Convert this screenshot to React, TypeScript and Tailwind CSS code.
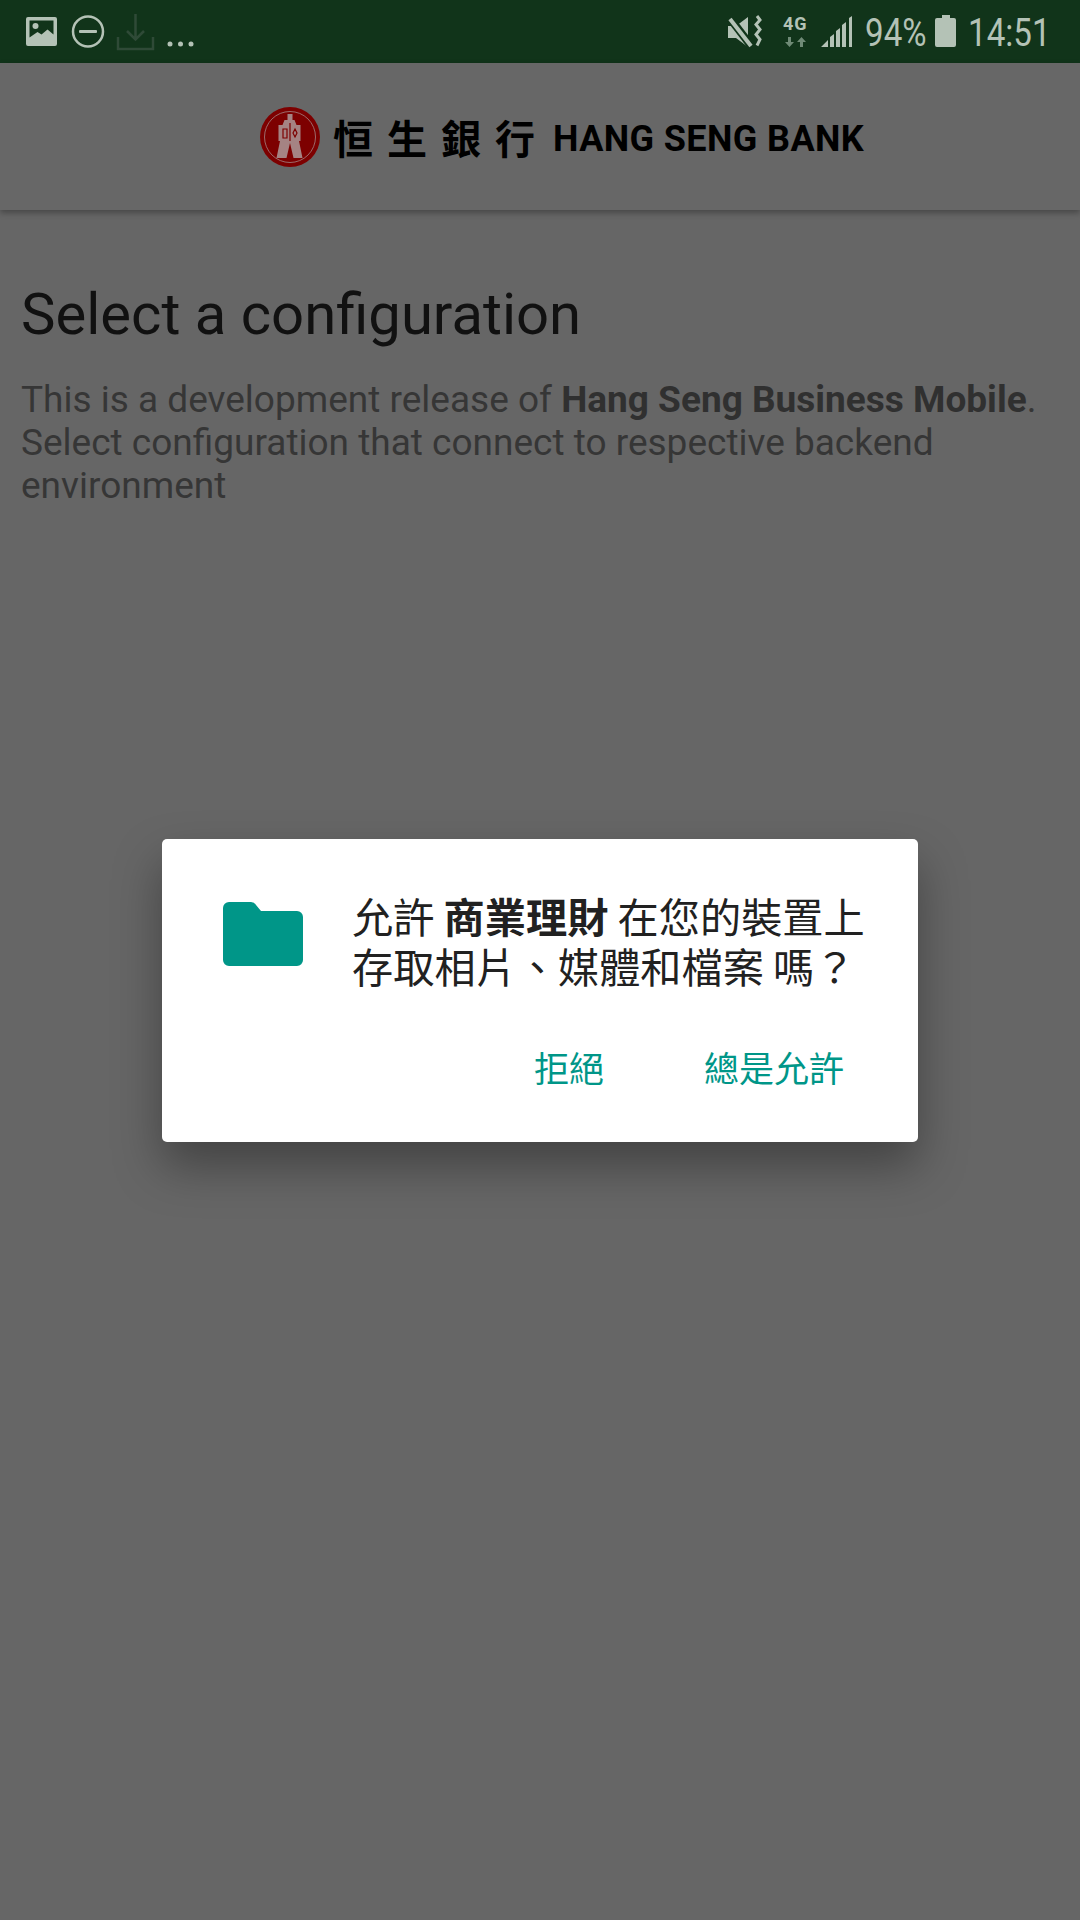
export default function App() {
  const sans = "font-['Roboto','Noto_Sans_CJK_TC',sans-serif]";
  return (
    <div className={`w-[1080px] h-[1920px] flex flex-col bg-[#666666] overflow-hidden ${sans}`}>
      <div className="h-[63px] shrink-0 bg-[#11341a] relative text-[#b4c2b6]">
        <svg width="1080" height="63" className="absolute left-0 top-0">
          <path fillRule="evenodd" d="M28 17h27a2 2 0 0 1 2 2v25a2 2 0 0 1-2 2H28a2 2 0 0 1-2-2V19a2 2 0 0 1 2-2zM29.500 20.500v17l8-5.500 4 2.500 6-5 6 5v-14z" fill="#b4c2b6" />
          <circle cx="35.500" cy="26" r="3" fill="#b4c2b6" />
          <circle cx="88" cy="31.500" r="15" fill="none" stroke="#b4c2b6" strokeWidth="2.500" />
          <rect x="79" y="30" width="18" height="3" rx="1" fill="#b4c2b6" />
          <path d="M135.500 14v25M127 31l8.500 8.500L144 31M118 37v12h35V37" fill="none" stroke="#2f4a37" strokeWidth="2.500" />
          <circle cx="170" cy="44" r="2.500" fill="#b4c2b6" />
          <circle cx="180.500" cy="44" r="2.500" fill="#b4c2b6" />
          <circle cx="191" cy="44" r="2.500" fill="#b4c2b6" />
          <path d="M728 26h8l12-9v30l-12-9h-8z" fill="#b4c2b6" />
          <path d="M729 17l23 30" stroke="#11341a" strokeWidth="8" />
          <path d="M730 19l21 27" stroke="#b4c2b6" strokeWidth="4" />
          <path d="M757 16l3 4-4 4.500 4 5-4 5 4 5-3 6" fill="none" stroke="#b4c2b6" strokeWidth="3" />
          <path d="M788 37h3v5h3l-4.500 5-4.500-5h3zM800 47h3v-5h3l-4.500-5-4.500 5h3z" fill="#6f8a76" />
          <path d="M821 47l7-7v7zM830 47V37l4-3v13zM836 47V31l4-3v19zM842 47V25l4-3v25zM849 47V18l3-2v31z" fill="#b4c2b6" />
          <path d="M937 18h5v-3h8v3h4a2 2 0 0 1 2 2v25a2 2 0 0 1-2 2h-17a2 2 0 0 1-2-2V20a2 2 0 0 1 2-2z" fill="#b4c2b6" />
        </svg>
        <span className="absolute left-[783px] top-[14px] text-[18px] leading-[20px] font-bold tracking-[1px]">4G</span>
        <span className="absolute left-[865px] top-[11px] text-[39px] leading-[44px] scale-x-[0.85] origin-left">94%</span>
        <span className="absolute left-[968px] top-[11px] text-[39px] leading-[44px] scale-x-[0.85] origin-left">14:51</span>
      </div>

      <div className="relative flex-1 flex flex-col">
        <header className="h-[147px] shrink-0 bg-[#676767] shadow-[0_3px_6px_rgba(0,0,0,0.3)] flex items-center pl-[259px]">
          <svg width="62" height="62" viewBox="0 0 62 62" className="mr-[12px] shrink-0">
            <circle cx="31" cy="31" r="30" fill="#7d0000" />
            <circle cx="31" cy="31" r="25.500" fill="none" stroke="#9c6a6a" strokeWidth="1" />
            <path d="M28.500 8h5v6h2l2 5h4v16h-1.500l3.500 17H34.500l-3.500-15-3.500 15H17.500l3.500-17H19.500V19h4l2-5h3z" fill="#a58383" />
            <path d="M24 23h4v9h-4zM31 17v18M36 23l2 4-2 4-2-4z" fill="none" stroke="#7d0000" strokeWidth="1.200" />
          </svg>
          <span className="text-[40px] leading-[48px] font-bold text-black tracking-[14px] font-['Noto_Sans_CJK_TC',serif] mr-[4px] whitespace-nowrap">恒生銀行</span>
          <span className="text-[36px] leading-[40px] mt-[4px] font-bold text-black tracking-[0.4px] font-['Roboto',sans-serif] whitespace-nowrap">HANG SENG BANK</span>
        </header>

        <main className="px-[21px] pt-[69px]">
          <h1 className="text-[58px] leading-[70px] text-[#111111]">Select a configuration</h1>
          <p className="mt-[29px] text-[37px] leading-[43px] text-[#363636] w-[1050px]">
            This is a development release of <b className="text-[#303030]">Hang Seng Business Mobile</b>. Select configuration that connect to respective backend environment
          </p>
        </main>

        <div className="absolute inset-0 flex items-center justify-center pb-[2px]">
          <div className="w-[756px] h-[303px] bg-white rounded-[5px] shadow-[0_24px_48px_rgba(0,0,0,0.35)] flex flex-col">
            <div className="flex pl-[61px] pt-[51px]">
              <svg width="80" height="64" viewBox="0 0 80 64" className="mt-[12px] shrink-0">
                <path d="M6 0h22a6 6 0 0 1 5 3l5 6h36a6 6 0 0 1 6 6v43a6 6 0 0 1-6 6H6a6 6 0 0 1-6-6V6a6 6 0 0 1 6-6z" fill="#009688" />
              </svg>
              <p className="ml-[49px] w-[530px] text-[41.200px] leading-[50px] text-[#212121] font-['Noto_Sans_CJK_TC',sans-serif]">
                允許 <b>商業理財</b> 在您的裝置上存取相片、媒體和檔案 嗎？
              </p>
            </div>
            <div className="flex justify-end mt-[55px] pr-[74px] text-[35px] leading-[44px] text-[#009688] font-['Noto_Sans_CJK_TC',sans-serif]">
              <span className="mr-[100px]">拒絕</span>
              <span>總是允許</span>
            </div>
          </div>
        </div>
      </div>
    </div>
  );
}
